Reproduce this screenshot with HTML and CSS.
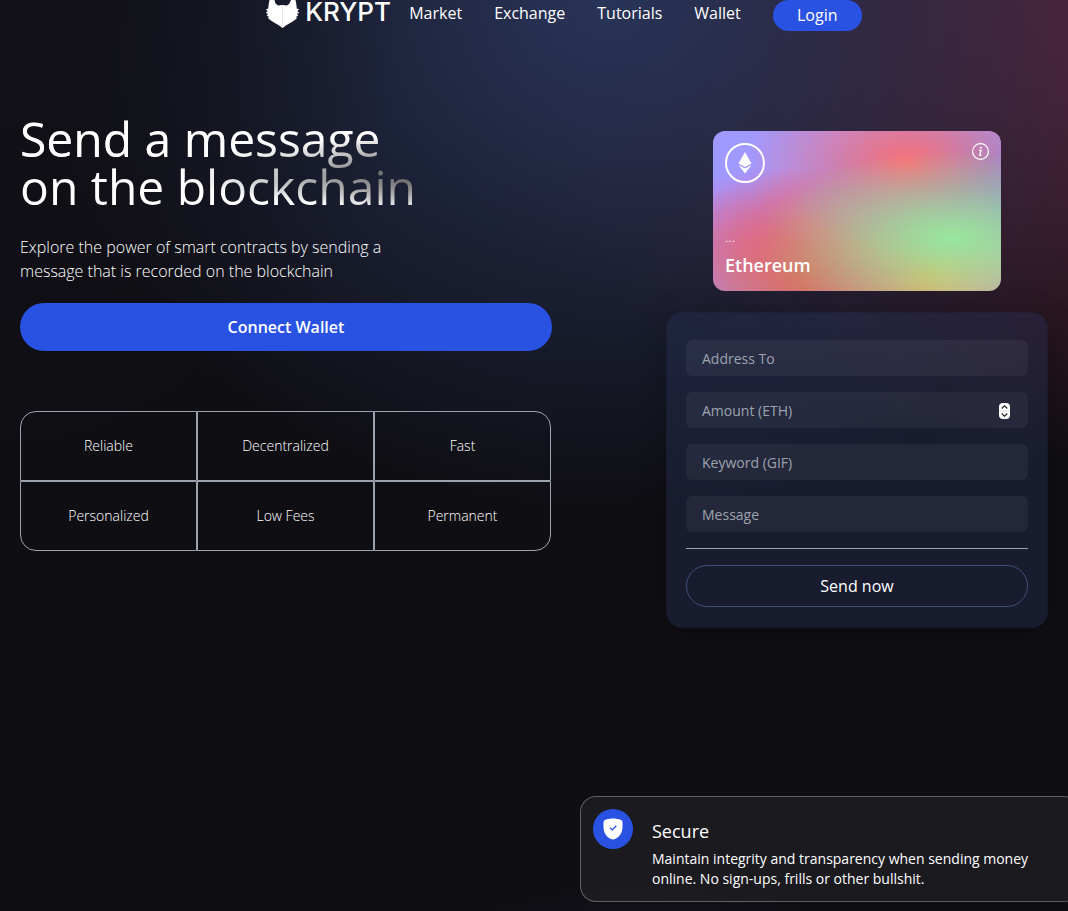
FILE: index.html
```html
<!DOCTYPE html>
<html lang="en">
<head>
<meta charset="utf-8">
<meta name="viewport" content="width=device-width, initial-scale=1">
<title>Krypt</title>
<link rel="stylesheet" href="styles.css">
</head>
<body>
<div class="welcome">
  <nav class="navbar">
    <a class="logo" href="#">
      <svg class="logo-mark" viewBox="0 0 36 28" aria-hidden="true">
        <path fill="#fff" d="M4.500 0 H9.500 L10.500 3.500 L13 5.500 Q17.500 4.300 22 5.500 L24.500 3.500 L26 0 H30.500 Q31.500 4 31.800 8.500 L34.300 9.500 L32.300 11 L34.300 13 L32 13.800 L33.300 16 L31 16.500 L32 18 Q30 20.500 26 22.500 Q21 25 17.500 28 Q14 25 9 22.500 Q5 20.500 3 18 L4 16.500 L1.700 16 L3 13.800 L.7 13 L2.700 11 L.7 9.500 L3.200 8.500 Q3.500 4 4.500 0 Z"/>
        <path stroke="#d4d5dd" stroke-width=".6" d="M17.500 6V26"/>
      </svg>
      <span class="logo-name">KRYPT</span>
    </a>
    <ul class="nav-links">
      <li><a href="#">Market</a></li>
      <li><a href="#">Exchange</a></li>
      <li><a href="#">Tutorials</a></li>
      <li><a href="#">Wallet</a></li>
    </ul>
    <button class="login" type="button">Login</button>
  </nav>

  <main class="hero">
    <section class="intro">
      <h1>Send a message<br>on the blockchain</h1>
      <p>Explore the power of smart contracts by sending a message that is recorded on the blockchain</p>
      <button class="connect" type="button">Connect Wallet</button>
      <ul class="features">
        <li>Reliable</li>
        <li>Decentralized</li>
        <li>Fast</li>
        <li>Personalized</li>
        <li>Low Fees</li>
        <li>Permanent</li>
      </ul>
    </section>

    <section class="transfer">
      <div class="eth-card">
        <div class="eth-top">
          <span class="eth-badge">
            <svg viewBox="0 0 14 22" width="14" height="22" fill="#fff" aria-hidden="true">
              <path d="M7 0 L13.500 11.500 L7 15 L.5 11.500 Z"/>
              <path d="M.5 13 L7 16.600 L13.500 13 L7 21.500 Z"/>
            </svg>
          </span>
          <svg class="info" viewBox="0 0 17 17" width="17" height="17" fill="none" stroke="#fff" aria-hidden="true">
            <circle cx="8.500" cy="8.500" r="7.900" stroke-width="1.200"/>
            <circle cx="9" cy="4.800" r="1" fill="#fff" stroke="none"/>
            <path d="M7 7.300 H9 L7.800 12 Q7.700 12.800 9.400 12" stroke-width="1.300"/>
          </svg>
        </div>
        <div>
          <p class="eth-address">...</p>
          <p class="eth-name">Ethereum</p>
        </div>
      </div>

      <form class="send-form">
        <input class="field" type="text" placeholder="Address To" aria-label="Address To">
        <div class="number-field">
          <input class="field" type="number" placeholder="Amount (ETH)" aria-label="Amount (ETH)">
          <svg class="stepper" viewBox="0 0 11 16" width="11" height="16" aria-hidden="true">
            <rect width="11" height="16" rx="4" fill="#fff"/>
            <path d="M0 8H11" stroke="#ddd"/>
            <path d="M2.700 5.500 L5.500 2.900 L8.300 5.500 M2.700 10.500 L5.500 13.100 L8.300 10.500" fill="none" stroke="#222" stroke-width="1.200"/>
          </svg>
        </div>
        <input class="field" type="text" placeholder="Keyword (GIF)" aria-label="Keyword (GIF)">
        <input class="field" type="text" placeholder="Message" aria-label="Message">
        <hr>
        <button class="send" type="button">Send now</button>
      </form>
    </section>
  </main>
</div>

<section class="services">
  <article class="service-card">
    <span class="service-icon">
      <svg viewBox="0 0 20 22" width="20" height="22" aria-hidden="true">
        <path fill="#fff" d="M10 .5 C12.500 .5 16 1 18 2 Q19.500 2.500 19.500 4 V9 C19.500 14.500 16.500 19 12.500 20.800 Q10 22.200 7.500 20.800 C3.500 19 .5 14.500 .5 9 V4 Q.5 2.500 2 2 C4 1 7.500 .5 10 .5 Z"/>
        <path d="M7 9.800 L9.200 11.900 L13.300 7.700" fill="none" stroke="#2952e3" stroke-width="1.300"/>
      </svg>
    </span>
    <div class="service-text">
      <h2>Secure</h2>
      <p>Maintain integrity and transparency when sending money online. No sign-ups, frills or other bullshit.</p>
    </div>
  </article>
</section>
</body>
</html>
```
FILE: styles.css
```css
* {
  box-sizing: border-box;
  margin: 0;
  padding: 0;
}

body {
  display: flex;
  flex-direction: column;
  height: 100vh;
  overflow: hidden;
  background: #0f0e13;
  color: #fff;
  font-family: "Open Sans", "Noto Sans", sans-serif;
  font-size: 16px;
  line-height: 24px;
}

ul {
  list-style: none;
}

a {
  color: inherit;
  text-decoration: none;
}

button,
input {
  border: none;
  outline: none;
  color: #fff;
  font: inherit;
}

button {
  cursor: pointer;
}

.welcome {
  flex: none;
  padding-bottom: 80px;
  background-color: #0f0e13;
  background-image:
    radial-gradient(38% 70% at 0% 0%, hsl(245, 18%, 8%) 0, transparent 100%),
    radial-gradient(55% 72% at 57% 0%, hsl(225, 38%, 25%) 0, transparent 100%),
    radial-gradient(86% 68% at 122% 0%, hsl(339, 45%, 28%) 0, transparent 100%);
}

.navbar {
  display: flex;
  justify-content: center;
  align-items: flex-start;
  padding-left: 59px;
}

.logo {
  display: flex;
  gap: 4px;
  width: 128px;
  margin-right: 16px;
}

.logo-mark {
  flex: none;
  width: 36px;
  height: 28px;
}

.logo-name {
  font-family: Inter, sans-serif;
  font-size: 26px;
  font-weight: 500;
}

.nav-links {
  display: flex;
  gap: 32px;
  padding-top: 1px;
}

.login {
  min-width: 89px;
  height: 31px;
  margin-left: 32px;
  padding: 0 24px 2px;
  border-radius: 16px;
  background: #2952e3;
}

.hero {
  display: grid;
  grid-template-columns: minmax(0, 1fr) 382px;
  column-gap: 114px;
  padding: 84px 20px 0;
}

h1 {
  background-color: #fff;
  background-image:
    radial-gradient(at 4% 36%, #fff 0, transparent 53%),
    radial-gradient(at 100% 60%, #000 0, transparent 50%);
  -webkit-background-clip: text;
  background-clip: text;
  color: transparent;
  font-size: 48px;
  font-weight: 400;
  line-height: 48px;
}

.intro p {
  max-width: 390px;
  margin: 24px 0 20px;
  font-weight: 300;
}

.connect {
  width: 100%;
  height: 48px;
  border-radius: 24px;
  background: #2952e3;
  font-weight: 600;
}

.features {
  display: grid;
  grid-template-columns: repeat(3, 1fr);
  margin: 60px 1px 0 0;
  font-size: 14px;
  font-weight: 300;
  line-height: 20px;
}

.features li {
  display: flex;
  justify-content: center;
  align-items: center;
  height: 70px;
  border: 1px solid #9ca3af;
}

.features li:nth-child(1) { border-top-left-radius: 16px; }
.features li:nth-child(3) { border-top-right-radius: 16px; }
.features li:nth-child(4) { border-bottom-left-radius: 16px; }
.features li:nth-child(6) { border-bottom-right-radius: 16px; }

.transfer {
  display: flex;
  flex-direction: column;
  align-items: center;
  padding-top: 16px;
}

.eth-card {
  display: flex;
  flex-direction: column;
  justify-content: space-between;
  width: 288px;
  height: 160px;
  padding: 12px;
  border-radius: 12px;
  background-color: #a099ff;
  background-image:
    radial-gradient(at 83% 67%, rgb(152, 231, 156) 0, transparent 58%),
    radial-gradient(at 67% 20%, hsl(357, 94%, 71%) 0, transparent 59%),
    radial-gradient(at 88% 35%, hsl(222, 81%, 65%) 0, transparent 50%),
    radial-gradient(at 31% 91%, hsl(9, 61%, 61%) 0, transparent 52%),
    radial-gradient(at 27% 71%, hsl(336, 91%, 65%) 0, transparent 49%),
    radial-gradient(at 74% 89%, hsl(30, 98%, 65%) 0, transparent 51%),
    radial-gradient(at 53% 75%, hsl(174, 94%, 68%) 0, transparent 45%);
}

.eth-top {
  display: flex;
  justify-content: space-between;
}

.eth-badge {
  display: flex;
  justify-content: center;
  align-items: center;
  width: 40px;
  height: 40px;
  border: 2px solid #fff;
  border-radius: 50%;
}

.eth-address {
  font-size: 14px;
  font-weight: 300;
  line-height: 20px;
}

.eth-name {
  margin-top: 4px;
  font-size: 18px;
  font-weight: 600;
  line-height: 28px;
}

.send-form {
  display: flex;
  flex-direction: column;
  gap: 16px;
  width: 100%;
  margin-top: 21px;
  padding: 27px 19px 20px;
  border: 1px solid rgba(0, 0, 0, 0.1);
  border-radius: 16px;
  background: rgba(39, 51, 89, 0.4);
  box-shadow: 0 4px 30px rgba(0, 0, 0, 0.2);
}

.field {
  width: 100%;
  height: 36px;
  padding: 8px 16px;
  border-radius: 6px;
  background: rgba(255, 255, 255, 0.05);
  font-size: 14px;
  line-height: 20px;
  appearance: textfield;
}

.field::placeholder {
  color: #9ca3af;
}

.field::-webkit-inner-spin-button {
  display: none;
}

.number-field {
  position: relative;
  display: flex;
}

.stepper {
  position: absolute;
  top: 11px;
  right: 18px;
}

hr {
  border: none;
  border-top: 1px solid #9ca3af;
}

.send {
  height: 42px;
  border: 1px solid #3d4f7c;
  border-radius: 21px;
  background: transparent;
}

.services {
  display: flex;
  flex: 1;
  justify-content: flex-end;
  align-items: flex-start;
  min-height: 0;
  padding-top: 88px;
  background-color: #0f0e13;
  background-image:
    radial-gradient(at 50% 100%, hsl(225, 39%, 25%) 0, transparent 50%);
  background-repeat: no-repeat;
  background-size: 122% 590px;
}

.service-card {
  display: flex;
  gap: 19px;
  width: 500px;
  margin-right: -12px;
  padding: 12px;
  border: 1px solid rgba(255, 255, 255, 0.3);
  border-radius: 16px;
  background: rgba(255, 255, 255, 0.05);
}

.service-icon {
  display: flex;
  flex: none;
  justify-content: center;
  align-items: center;
  width: 40px;
  height: 40px;
  border-radius: 50%;
  background: #2952e3;
}

.service-text {
  max-width: 380px;
}

.service-text h2 {
  margin: 8px 0 4px;
  font-size: 18px;
  font-weight: 400;
  line-height: 28px;
}

.service-text p {
  font-size: 14px;
  line-height: 20px;
}
```
